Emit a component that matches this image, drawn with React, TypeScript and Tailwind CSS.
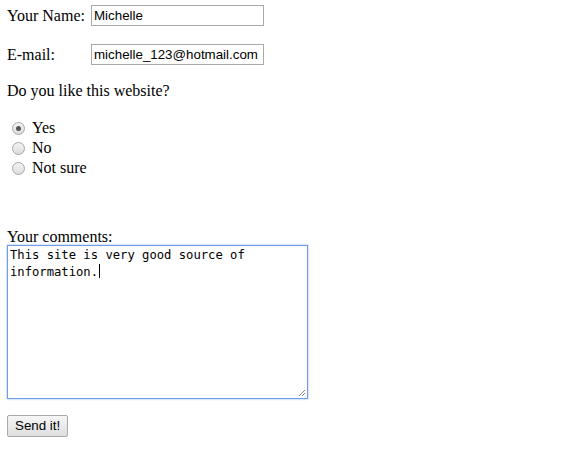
import { useState } from 'react';

const serif = "font-['Liberation_Serif','Times_New_Roman',serif]";
const sans = "font-['Liberation_Sans',Arial,sans-serif]";

function Radio({ checked }: { checked?: boolean }) {
  return (
    <span className="flex h-[13px] w-[13px] items-center justify-center rounded-full border border-[#a6a6a6] bg-gradient-to-b from-[#f4f4f4] to-[#dcdcdc]">
      {checked && <span className="h-[5px] w-[5px] rounded-full bg-[#555]" />}
    </span>
  );
}

export default function App() {
  const [choice] = useState('Yes');
  const options = ['Yes', 'No', 'Not sure'];

  return (
    <div className={`min-h-screen bg-white pl-[7px] pt-[5px] text-[16px] leading-[18px] text-black ${serif}`}>
      {/* Name + email rows */}
      <div className="flex items-center">
        <span className="w-[84px]">Your Name:</span>
        <div className={`flex h-[21px] w-[173px] items-center border border-[#a9a9a9] px-[2px] text-[13.33px] ${sans}`}>
          Michelle
        </div>
      </div>
      <div className="mt-[18px] flex items-center">
        <span className="w-[84px]">E-mail:</span>
        <div className={`flex h-[21px] w-[173px] items-center border border-[#a9a9a9] px-[2px] text-[13.33px] ${sans}`}>
          michelle_123@hotmail.com
        </div>
      </div>

      <p className="mt-[17px]">Do you like this website?</p>

      {/* Radio group */}
      <div className="mt-[18px] flex flex-col">
        {options.map((o) => (
          <label key={o} className="flex h-5 items-center">
            <span className="ml-[5px] mr-[7px]">
              <Radio checked={choice === o} />
            </span>
            {o}
          </label>
        ))}
      </div>

      <p className="mt-[50px] leading-[17px]">Your comments:</p>

      <div className="relative h-[154px] w-[301px] border border-[#6f9ce8] shadow-[0_0_2px_#8fb4f2]">
        <div className="px-[2px] pt-[2px] font-['DejaVu_Sans_Mono',monospace] text-[12.2px] leading-[14px] text-black">
          This site is very good source of
          <br />
          information.<span className="ml-[1px] inline-block h-[14px] w-px translate-y-[2px] bg-black" />
        </div>
        <svg className="absolute bottom-[1px] right-[1px]" width="8" height="8" viewBox="0 0 8 8">
          <path d="M7 1 L1 7 M7 4 L4 7" stroke="#888" strokeWidth="1" />
        </svg>
      </div>

      <button
        className={`mt-[16px] flex h-[22px] items-center rounded-[2px] border border-[#a9a9a9] bg-gradient-to-b from-[#f6f6f6] to-[#dedede] px-[7px] text-[13.33px] text-black ${sans}`}
      >
        Send it!
      </button>
    </div>
  );
}
